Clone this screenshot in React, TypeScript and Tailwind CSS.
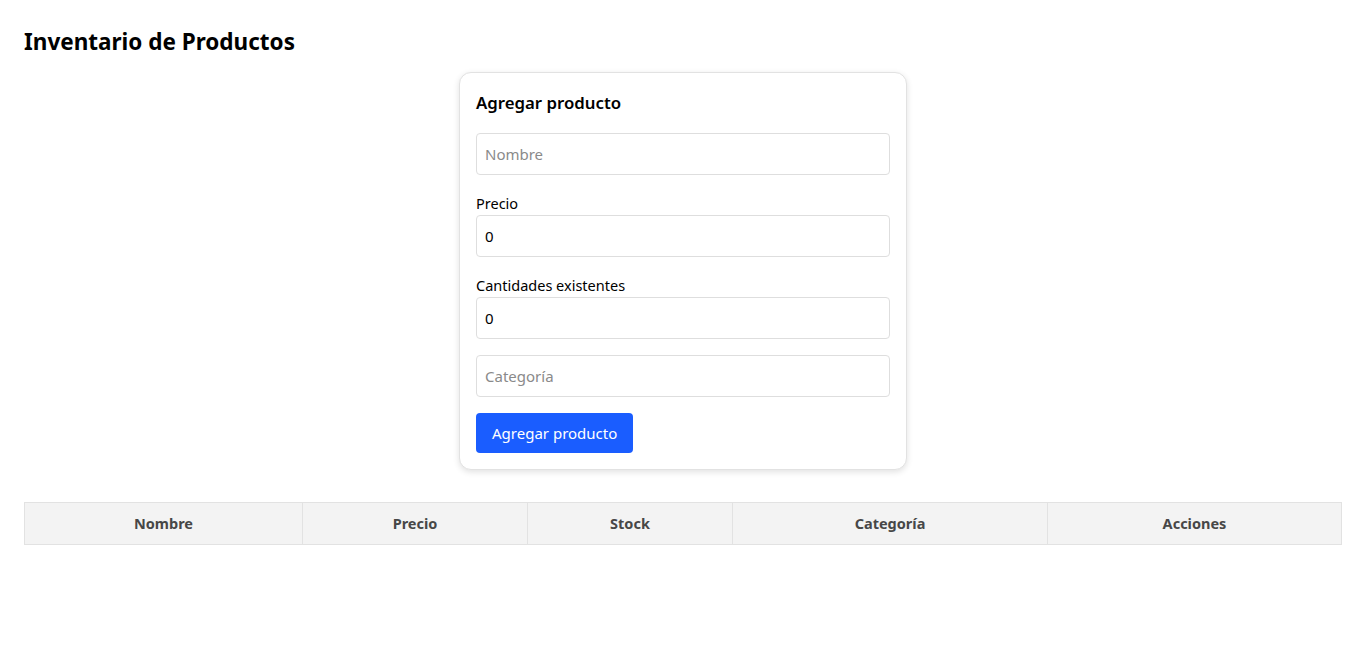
import React, { useState } from "react";

type Producto = {
    nombre: string;
    precio: number;
    stock: number;
    categoria: string;
};

const App = () => {
    const [productos, setProductos] = useState<Producto[]>([]);
    const [nombre, setNombre] = useState("");
    const [precio, setPrecio] = useState(0);
    const [stock, setStock] = useState(0);
    const [categoria, setCategoria] = useState("");

    const agregar = () => {
        if (!nombre) return;
        setProductos([...productos, { nombre, precio, stock, categoria }]);
        setNombre("");
        setPrecio(0);
        setStock(0);
        setCategoria("");
    };

    const inputClass =
        "w-full h-[42px] border border-[#dedede] rounded-[4px] px-2 text-[15px] text-black placeholder:text-[#8a8a8a] outline-none";

    return (
        <div className="min-h-screen bg-white px-6 pt-[26px] text-black font-['Noto_Sans',sans-serif]">
            <h1 className="text-[22.5px] leading-8 font-bold">Inventario de Productos</h1>

            <div className="mx-auto mt-[14px] w-[448px] rounded-xl border border-[#e2e2e2] bg-white p-4 shadow-[0_2px_6px_rgba(0,0,0,0.12)]">
                <h2 className="text-[16.8px] leading-7 font-semibold mb-4">Agregar producto</h2>

                <div className="mb-4">
                    <input
                        className={inputClass}
                        placeholder="Nombre"
                        value={nombre}
                        onChange={(e) => setNombre(e.target.value)}
                    />
                </div>

                <div className="mb-4">
                    <label className="block text-[14.5px] leading-6">Precio</label>
                    <input
                        type="number"
                        className={inputClass}
                        value={precio}
                        onChange={(e) => setPrecio(Number(e.target.value))}
                    />
                </div>

                <div className="mb-4">
                    <label className="block text-[14.5px] leading-6">Cantidades existentes</label>
                    <input
                        type="number"
                        className={inputClass}
                        value={stock}
                        onChange={(e) => setStock(Number(e.target.value))}
                    />
                </div>

                <div className="mb-4">
                    <input
                        className={inputClass}
                        placeholder="Categoría"
                        value={categoria}
                        onChange={(e) => setCategoria(e.target.value)}
                    />
                </div>

                <button
                    onClick={agregar}
                    className="h-10 rounded-[4px] bg-[#1a5dff] px-4 text-[15px] text-white"
                >
                    Agregar producto
                </button>
            </div>

            <table className="mt-8 w-full border-collapse">
                <thead>
                    <tr className="bg-[#f3f3f3] text-[#474747] text-[14.5px] font-bold">
                        <th className="w-[278px] h-[42px] border border-[#e2e2e2]">Nombre</th>
                        <th className="w-[225px] border border-[#e2e2e2]">Precio</th>
                        <th className="w-[205px] border border-[#e2e2e2]">Stock</th>
                        <th className="w-[315px] border border-[#e2e2e2]">Categoría</th>
                        <th className="border border-[#e2e2e2]">Acciones</th>
                    </tr>
                </thead>
                <tbody>
                    {productos.map((p, i) => (
                        <tr key={i}>
                            <td className="border border-[#e2e2e2] p-2 text-center">{p.nombre}</td>
                            <td className="border border-[#e2e2e2] p-2 text-center">{p.precio}</td>
                            <td className="border border-[#e2e2e2] p-2 text-center">{p.stock}</td>
                            <td className="border border-[#e2e2e2] p-2 text-center">{p.categoria}</td>
                            <td className="border border-[#e2e2e2] p-2 text-center">
                                <button
                                    onClick={() => setProductos(productos.filter((_, j) => j !== i))}
                                    className="text-red-600"
                                >
                                    Eliminar
                                </button>
                            </td>
                        </tr>
                    ))}
                </tbody>
            </table>
        </div>
    );
};

export default App;
